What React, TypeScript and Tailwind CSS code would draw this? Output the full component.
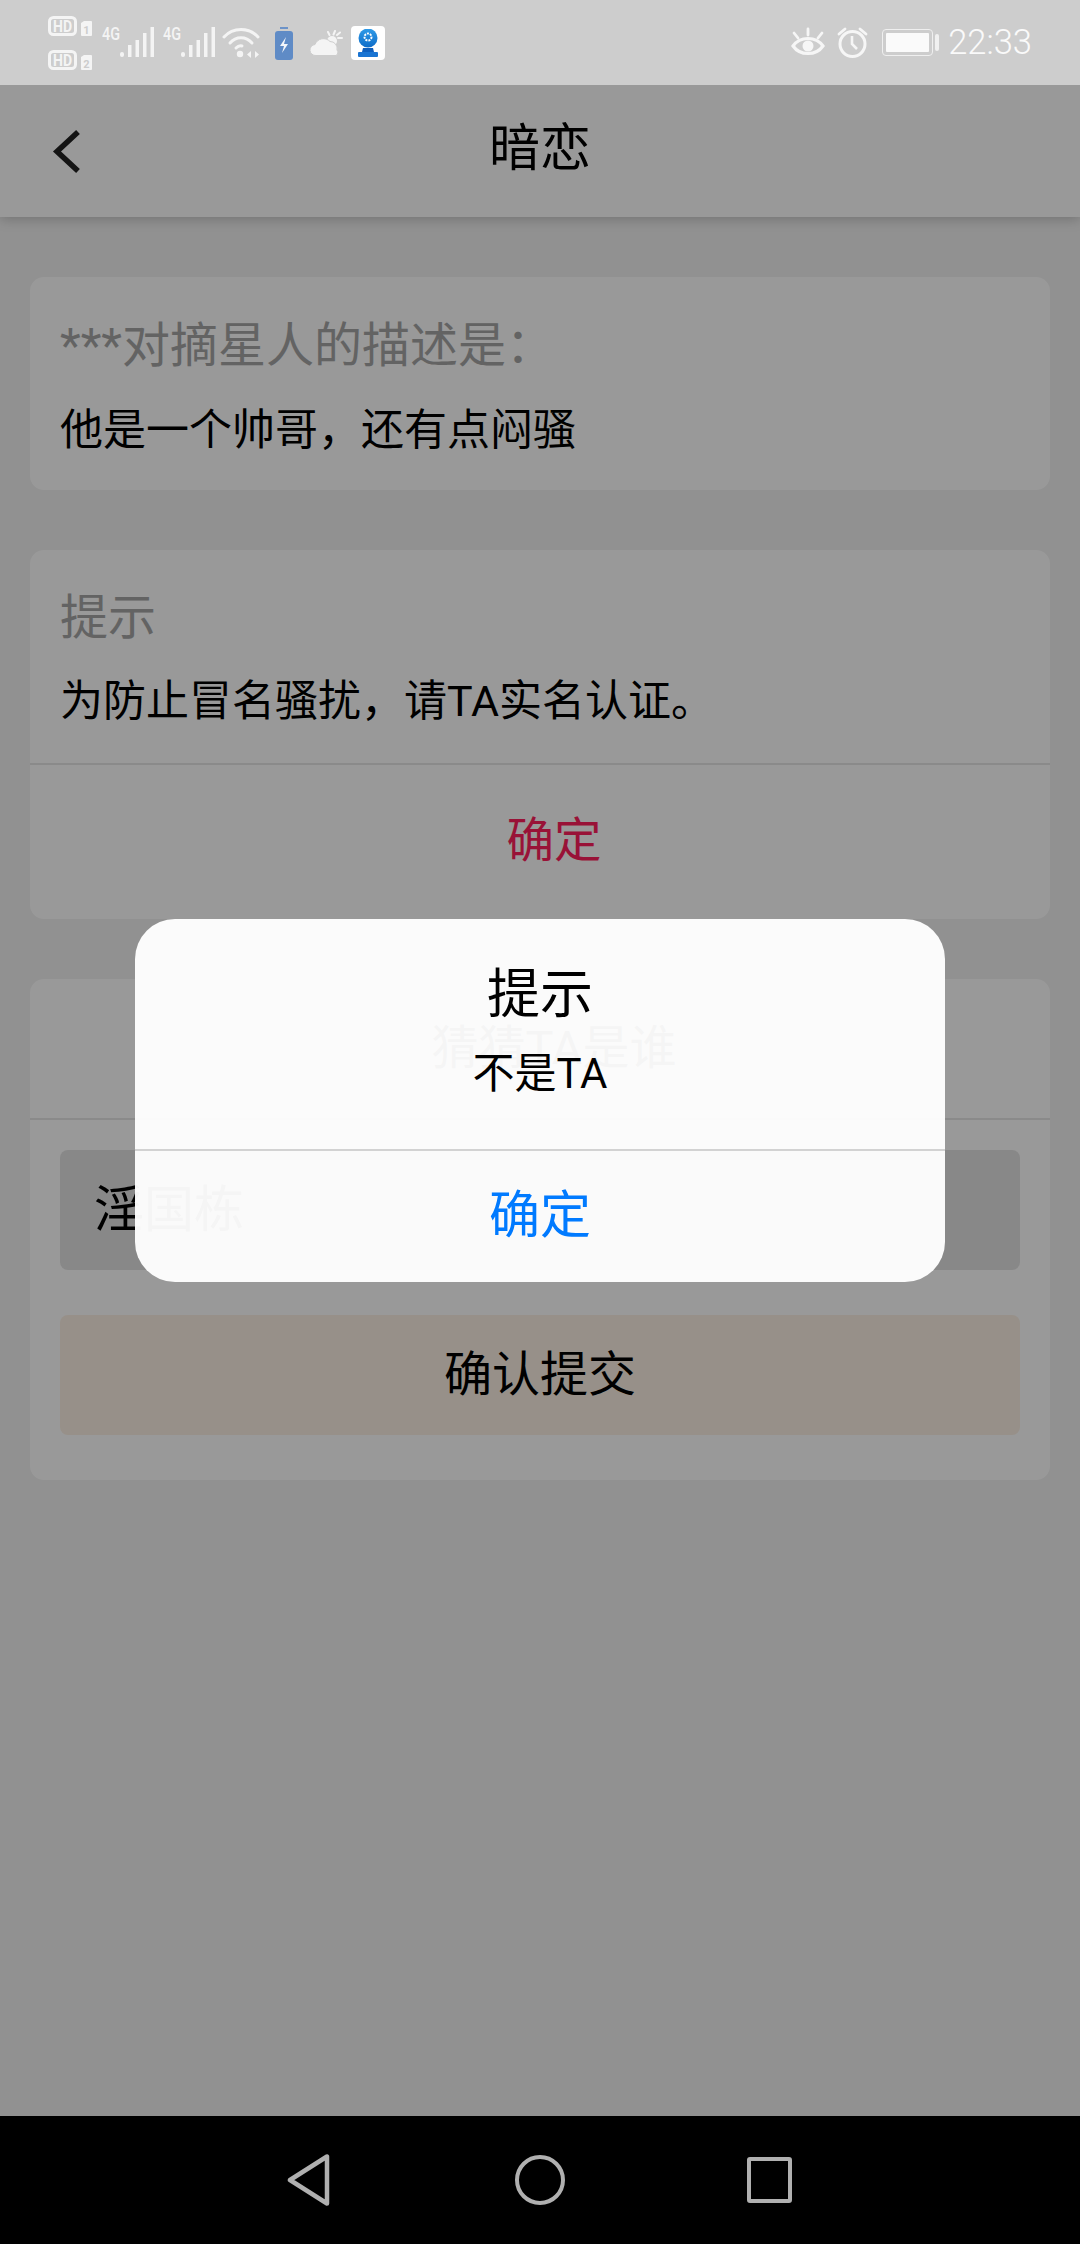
import React from "react";

function Sim({ n }: { n: string }) {
  return (
    <svg width="44" height="20" viewBox="0 0 44 20" className="block">
      <rect x="1.500" y="1.500" width="26" height="17" rx="4" fill="none" stroke="#f4f4f4" strokeWidth="3" />
      <text x="14.500" y="15.500" textAnchor="middle" fontSize="16" fontWeight="700" fill="#f4f4f4" fontFamily="Roboto, sans-serif" textLength="19" lengthAdjust="spacingAndGlyphs">HD</text>
      <path d="M33 7l3-2h7a1 1 0 0 1 1 1v13a1 1 0 0 1-1 1H34a1 1 0 0 1-1-1z" fill="#f4f4f4" />
      <text x="38.500" y="18" textAnchor="middle" fontSize="11" fontWeight="700" fill="#cdcdcd" fontFamily="Roboto, sans-serif">{n}</text>
    </svg>
  );
}

function Signal() {
  return (
    <svg width="52" height="40" viewBox="0 -6 52 40" className="block -mt-[6px]">
      <text x="0" y="15" fontSize="19" fontWeight="500" fill="#f4f4f4" fontFamily="Roboto, sans-serif" textLength="18" lengthAdjust="spacingAndGlyphs">4G</text>
      <g fill="#f4f4f4">
        <rect x="18" y="27" width="4" height="5" rx="2" />
        <rect x="26" y="20" width="3.500" height="12" />
        <rect x="33.500" y="15" width="3.500" height="17" />
        <rect x="41" y="8" width="3.500" height="24" />
        <rect x="48.500" y="2" width="3.500" height="30" />
      </g>
    </svg>
  );
}

function Wifi() {
  return (
    <svg width="38" height="32" viewBox="0 0 38 32" className="block">
      <g fill="none" stroke="#f4f4f4" strokeWidth="3" strokeLinecap="round">
        <path d="M2 10C11 0 27 0 36 10" />
        <path d="M8 16C14 9 24 9 30 16" />
        <path d="M14 21C16 19 18 18.500 20 19" />
      </g>
      <circle cx="18" cy="27" r="3.200" fill="#f4f4f4" />
      <path d="M29 24v7l-4-3.500zM33 24v7l4-3.500z" fill="#f4f4f4" />
    </svg>
  );
}

function Charging() {
  return (
    <svg width="18" height="33" viewBox="0 0 18 33" className="block">
      <rect x="5" y="0" width="8" height="2" fill="#6d93c8" />
      <rect x="0" y="4" width="18" height="29" rx="3" fill="#5f8bc6" />
      <path d="M11 10l-6 9h4l-2 7 6-9H9z" fill="#f4f6fa" />
    </svg>
  );
}

function Weather() {
  return (
    <svg width="33" height="26" viewBox="0 0 33 26" className="block">
      <g stroke="#f4f4f4" strokeWidth="2" strokeLinecap="round">
        <path d="M18 2l1.500 3M25 1l-1.500 3.500M32 8h-4M30 2.500l-3 2.500" />
      </g>
      <circle cx="22" cy="11" r="5" fill="#f4f4f4" />
      <path d="M6 25.500a5.500 5.500 0 0 1-1-11 9 9 0 0 1 15-3 7 7 0 0 1 7 8.500 3.500 3.500 0 0 1-1 5.500z" fill="#f4f4f4" stroke="#cdcdcd" strokeWidth="1" />
    </svg>
  );
}

function AppIcon() {
  return (
    <div className="w-[34px] h-[34px] bg-white rounded-[4px] flex items-center justify-center">
      <svg width="22" height="28" viewBox="0 0 22 28" className="block">
        <defs>
          <linearGradient id="cam" x1="0" y1="0" x2="0" y2="1">
            <stop offset="0" stopColor="#2f9be8" />
            <stop offset="1" stopColor="#0e6cc8" />
          </linearGradient>
        </defs>
        <circle cx="11" cy="9" r="9.500" fill="url(#cam)" />
        <circle cx="11" cy="8" r="3.500" fill="none" stroke="#fff" strokeWidth="2" strokeDasharray="2 1" />
        <path d="M6 19h10l1 4H5z" fill="#0f5fbd" />
        <rect x="1" y="23" width="20" height="5" rx="1" fill="#1a74d2" />
      </svg>
    </div>
  );
}

function Eye() {
  return (
    <svg width="34" height="30" viewBox="0 0 34 30" className="block">
      <path d="M2 19C9 9 25 9 32 19C25 29 9 29 2 19Z" fill="none" stroke="#f6f6f6" strokeWidth="3.200" />
      <circle cx="17" cy="19" r="5.500" fill="#f6f6f6" />
      <g stroke="#f6f6f6" strokeWidth="2.800" strokeLinecap="round">
        <path d="M17 2v6M3 6l4 5M31 6l-4 5" />
      </g>
    </svg>
  );
}

function Alarm() {
  return (
    <svg width="31" height="31" viewBox="0 0 31 31" className="block">
      <circle cx="15.500" cy="17" r="12.500" fill="none" stroke="#f6f6f6" strokeWidth="3" />
      <path d="M15 9v8l5 5" fill="none" stroke="#f6f6f6" strokeWidth="2.600" />
      <path d="M2 7l6-5M29 7l-6-5" stroke="#f6f6f6" strokeWidth="2.800" strokeLinecap="round" />
    </svg>
  );
}

function StatusBattery() {
  return (
    <div className="flex items-center gap-[2px]">
      <div className="w-[51px] h-[27px] rounded-[4px] border border-[#efefef] p-[3px]">
        <div className="w-full h-full bg-[#fafafa] rounded-[1px]" />
      </div>
      <div className="w-[4px] h-[17px] bg-[#f0f0f0] rounded-[2px]" />
    </div>
  );
}

function StatusBar() {
  return (
    <div className="relative z-10 h-[85px] shrink-0 bg-[#cdcdcd] flex items-start justify-between pl-[48px] pr-[48px]">
      <div className="flex items-start">
        <div className="flex flex-col gap-[14px] pt-[16px]">
          <Sim n="1" />
          <Sim n="2" />
        </div>
        <div className="flex items-start pt-[25px] ml-[10px]">
          <Signal />
          <div className="ml-[9px]"><Signal /></div>
          <div className="ml-[7px] pt-[2px]"><Wifi /></div>
          <div className="ml-[15px] pt-[2px]"><Charging /></div>
          <div className="ml-[17px] pt-[5px]"><Weather /></div>
          <div className="ml-[8px] mt-[1px]"><AppIcon /></div>
        </div>
      </div>
      <div className="flex items-center h-[85px] pb-[1px]">
        <Eye />
        <div className="ml-[12px]"><Alarm /></div>
        <div className="ml-[14px]"><StatusBattery /></div>
        <span className="ml-[9px] text-[34.5px] leading-none font-light text-[#fafafa] font-['Roboto',sans-serif]">22:33</span>
      </div>
    </div>
  );
}

function Header() {
  return (
    <div className="relative h-[132px] shrink-0 bg-white shadow-[0_2px_12px_rgba(0,0,0,0.22)] flex items-center justify-center">
      <svg width="30" height="46" viewBox="0 0 30 46" className="absolute left-[51px] top-[44px]">
        <path d="M27 3L6 22.500L27 42" fill="none" stroke="#222" strokeWidth="5.500" />
      </svg>
      <span className="text-[51px] leading-none text-black pb-[5px]">暗恋</span>
    </div>
  );
}

function Card({ children, className }: { children: React.ReactNode; className: string }) {
  return <div className={"mx-[30px] bg-white rounded-[14px] shrink-0 " + className}>{children}</div>;
}

function NavBar() {
  return (
    <div className="h-[128px] shrink-0 bg-black flex items-center justify-center">
      <svg width="44" height="52" viewBox="0 0 44 52" className="block">
        <path d="M3 26L40 2.500V49.500Z" fill="none" stroke="#b0b0b0" strokeWidth="4.500" strokeLinejoin="round" />
      </svg>
      <div className="w-[50px] h-[50px] rounded-full border-[4.5px] border-[#b0b0b0] ml-[184px]" />
      <div className="w-[45px] h-[46px] rounded-[3px] border-[4.5px] border-[#b0b0b0] ml-[182px] mr-[2px]" />
    </div>
  );
}

export default function App() {
  return (
    <div className="w-[1080px] h-[2244px] flex flex-col overflow-hidden font-['Roboto','Noto_Sans_CJK_SC',sans-serif]">
      <StatusBar />
      <div className="relative flex-1 flex flex-col bg-[#f2f2f2]">
        <Header />
        <Card className="mt-[60px] h-[213px] px-[30px] pt-[40px]">
          <div className="text-[48px] leading-[58px] text-[#a6a6a6]">***对摘星人的描述是：</div>
          <div className="text-[43px] leading-[56px] text-black mt-[27px]">他是一个帅哥，还有点闷骚</div>
        </Card>
        <Card className="mt-[60px] h-[369px] flex flex-col">
          <div className="h-[215px] border-b-2 border-[#e6e6e6] px-[30px] pt-[39px] shrink-0">
            <div className="text-[48px] leading-[58px] text-[#a6a6a6]">提示</div>
            <div className="text-[43px] leading-[56px] text-black mt-[26px]">为防止冒名骚扰，请TA实名认证。</div>
          </div>
          <div className="flex-1 flex items-center justify-center pl-[28px] text-[47.5px] text-[#ff1f5c]">确定</div>
        </Card>
        <Card className="mt-[60px] h-[501px] flex flex-col">
          <div className="h-[141px] border-b-2 border-[#e6e6e6] flex items-center justify-center pl-[28px] text-[47px] text-black shrink-0">猜猜TA是谁</div>
          <div className="mx-[30px] mt-[30px] h-[120px] bg-[#e3e3e3] rounded-[8px] flex items-center px-[34px] text-[50px] text-black">淫国栋</div>
          <div className="mx-[30px] mt-[45px] h-[120px] bg-[#fcf1e5] rounded-[8px] flex items-center justify-center text-[48px] text-black">确认提交</div>
        </Card>
        <div className="absolute inset-0 bg-black/40 flex items-center justify-center">
          <div className="w-[810px] h-[363px] bg-white/[0.96] rounded-[40px] flex flex-col overflow-hidden">
            <div className="h-[230px] flex flex-col items-center pt-[42px] shrink-0">
              <div className="text-[53px] leading-[68px] text-black">提示</div>
              <div className="text-[42px] leading-[50px] text-black mt-[20px]">不是TA</div>
            </div>
            <div className="h-[132px] border-t-2 border-[#d2d2d2] flex items-center justify-center text-[51px] text-[#007aff]">确定</div>
          </div>
        </div>
      </div>
      <NavBar />
    </div>
  );
}
